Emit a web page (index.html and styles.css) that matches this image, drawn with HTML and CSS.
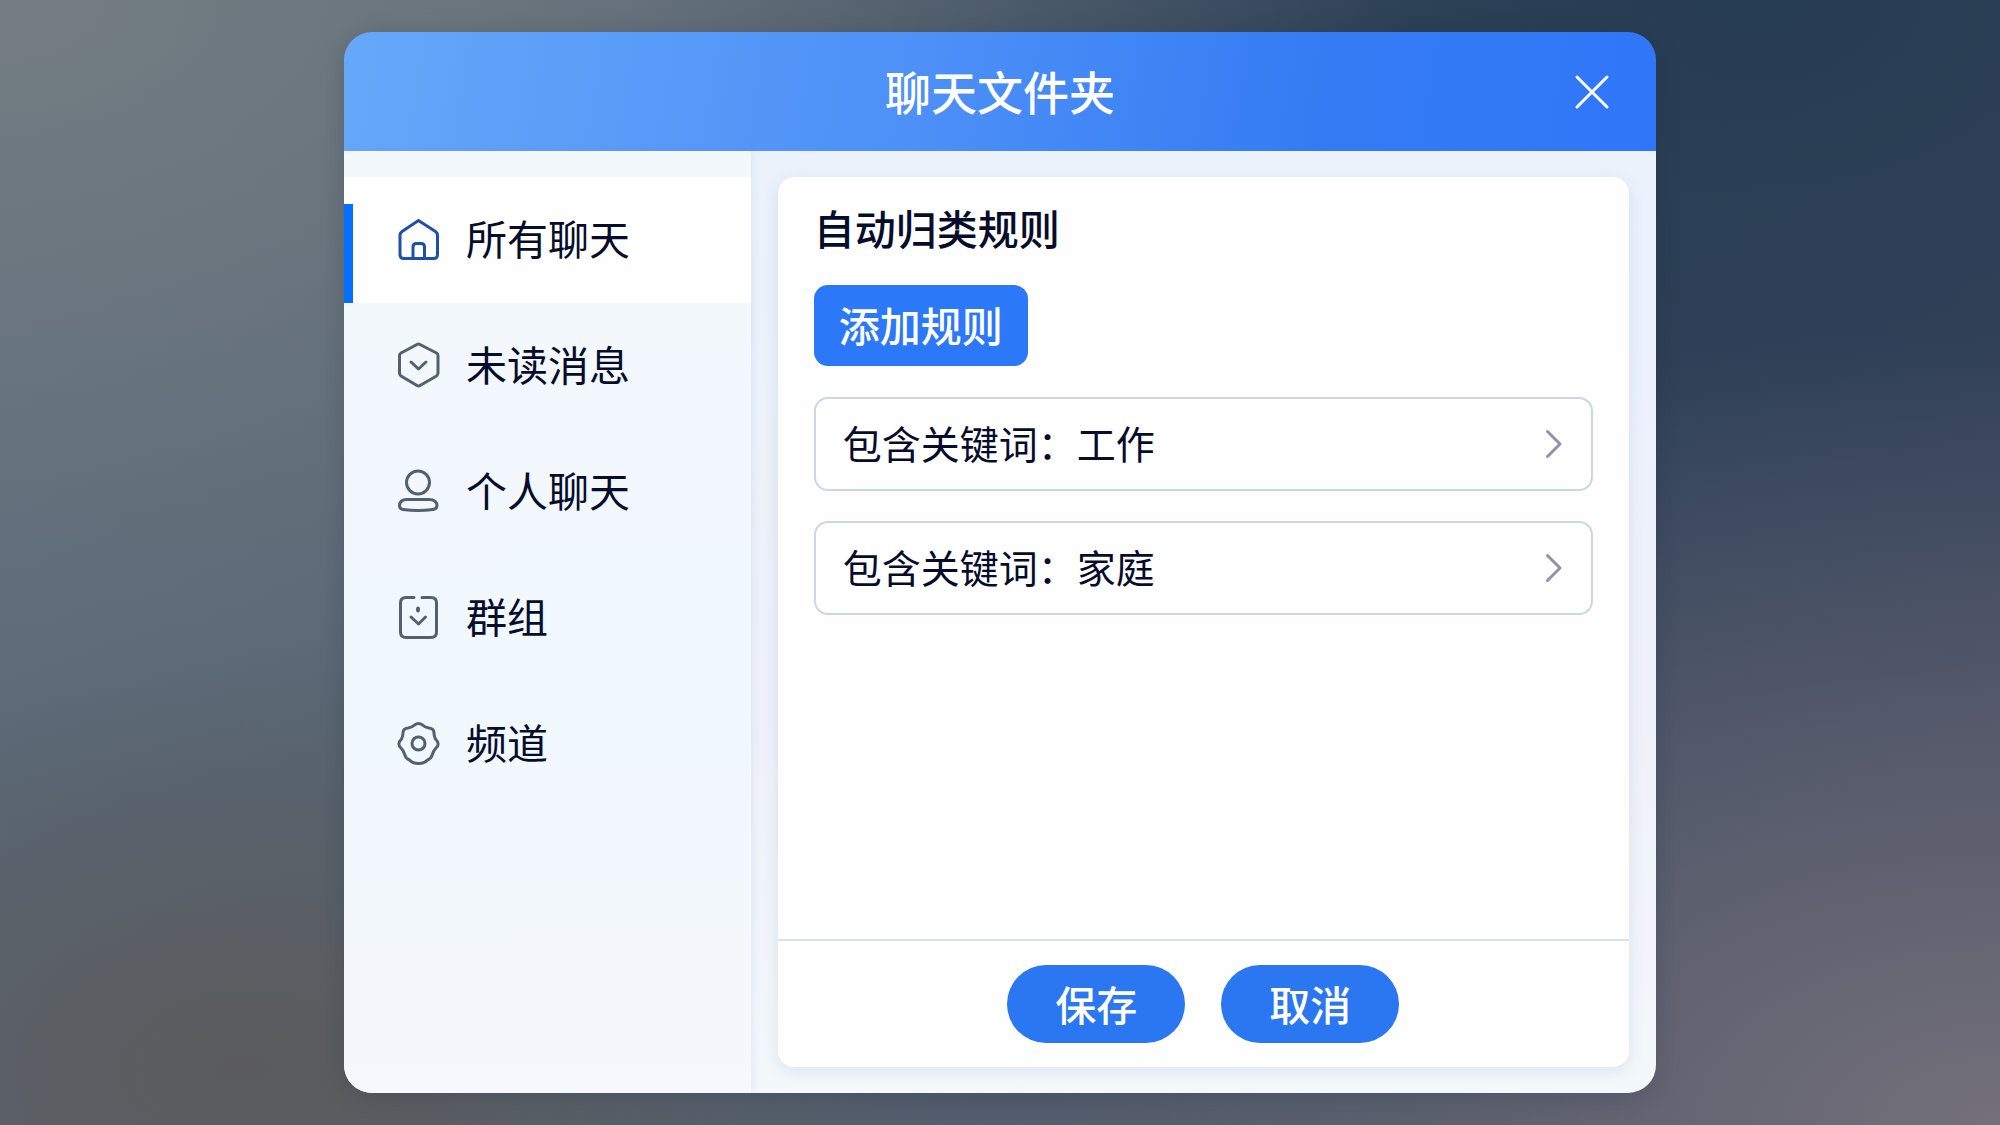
FILE: index.html
```html
<!DOCTYPE html>
<html lang="zh-CN">
<head>
  <meta charset="UTF-8">
  <title>聊天文件夹</title>
  <meta name="viewport" content="width=device-width, initial-scale=1.0">
  <link rel="stylesheet" href="styles.css">
</head>
<body>

  <div class="dialog" role="dialog" aria-labelledby="dialogTitle">
    <header class="dialog-header">
      <h1 id="dialogTitle">聊天文件夹</h1>
      <button class="close" type="button" aria-label="关闭">
        <svg viewBox="0 0 32 32"><path d="M1 1L31 31M31 1L1 31"/></svg>
      </button>
    </header>

    <div class="dialog-body">
      <nav class="sidebar">
        <a class="folder active" href="#all">
          <svg viewBox="0 0 42 42"><path d="M21.500 2.500L38.500 13.500Q40.500 15 40.500 17.500V36.500Q40.500 40.500 36.500 40.500H7Q3 40.500 3 36.500V17.500Q3 15 5 13.500Z"/><path d="M16 40V29Q16 25.500 19.500 25.500H24Q27.500 25.500 27.500 29V40"/></svg>
          <span>所有聊天</span>
        </a>
        <a class="folder" href="#unread">
          <svg viewBox="0 0 42 42"><path d="M20 .5Q21.500 -.5 23 .5L39.500 9Q41 10 41 11.500V29Q41 31 39.500 32L23 41.500Q21.500 42.500 20 41.500L4 32Q2.500 31 2.500 29V11.500Q2.500 10 4 9Z"/><path d="M14 18L21.500 25L29 18"/></svg>
          <span>未读消息</span>
        </a>
        <a class="folder" href="#personal">
          <svg viewBox="0 0 42 42"><circle cx="21" cy="12.500" r="11.500"/><path d="M10 29.500H32C37 29.500 40 32 40 36Q40 39 36 39.500Q21 41.500 6 39.500Q2.500 39 2.500 36C2.500 32 5 29.500 10 29.500Z"/></svg>
          <span>个人聊天</span>
        </a>
        <a class="folder" href="#groups">
          <svg viewBox="0 0 42 42"><path d="M17 1.500H9Q3.500 1.500 3.500 7V36Q3.500 41.500 9 41.500H34Q39.500 41.500 39.500 36V7Q39.500 1.500 34 1.500H25"/><ellipse class="dot" cx="21" cy="13.500" rx="2" ry="3"/><path d="M14 21L21.500 28L28.500 21"/></svg>
          <span>群组</span>
        </a>
        <a class="folder" href="#channels">
          <svg viewBox="0 0 42 42"><path d="M17.500 3Q21.500 0 25.500 3Q28 5.500 32 6Q37 6.500 37 11Q37 14 38.500 17Q43.500 22 39 26Q36.500 28.500 35.500 32Q34.500 36.500 30.500 38Q27.500 41.500 21.500 41.500Q15.500 41.500 12.500 38Q8.500 36.500 7.500 32Q6.500 28.500 4 26Q-.5 22 4.500 17Q6 14 6 11Q6 6.500 11 6Q15 5.500 17.500 3Z"/><circle cx="21.500" cy="21.500" r="6.500"/></svg>
          <span>频道</span>
        </a>
      </nav>

      <main class="content">
        <section class="panel">
          <div class="rules">
            <h2>自动归类规则</h2>
            <button class="add-rule" type="button">添加规则</button>
            <button class="rule" type="button">
              <span>包含关键词：工作</span>
              <svg viewBox="0 0 16 28"><path d="M1.500 1.500L14 14L1.500 26.500"/></svg>
            </button>
            <button class="rule" type="button">
              <span>包含关键词：家庭</span>
              <svg viewBox="0 0 16 28"><path d="M1.500 1.500L14 14L1.500 26.500"/></svg>
            </button>
          </div>
          <footer class="actions">
            <button type="button">保存</button>
            <button type="button">取消</button>
          </footer>
        </section>
      </main>
    </div>
  </div>

</body>
</html>
```
FILE: styles.css
```css
* {
  box-sizing: border-box;
}

body {
  margin: 0;
  min-height: 100vh;
  padding: 32px;
  display: flex;
  justify-content: center;
  font-family: "Noto Sans CJK SC", sans-serif;
  color: #060d2b;
  background:
    radial-gradient(ellipse at 100% 100%, #73707a 0%, rgba(115, 112, 122, 0) 50%),
    radial-gradient(ellipse at 12% 95%, #5b5b5c 0%, rgba(91, 91, 92, 0) 28%),
    radial-gradient(ellipse at 0% 0%, #747d83 0%, rgba(116, 125, 131, 0) 50%),
    radial-gradient(ellipse at 88% 0%, #273d53 0%, rgba(39, 61, 83, 0) 45%),
    linear-gradient(90deg, #5a6979 0%, #566472 25%, #33435b 82%, #38435c 100%);
}

button {
  border: none;
  font: inherit;
  cursor: pointer;
}

svg {
  flex: none;
  overflow: visible;
  fill: none;
  stroke: currentColor;
  stroke-width: 3;
  stroke-linecap: round;
  stroke-linejoin: round;
}

h1, h2 {
  margin: 0;
  font-weight: 500;
}

.dialog {
  width: 100%;
  max-width: 1312px;
  display: flex;
  flex-direction: column;
  border-radius: 28px;
  overflow: hidden;
  box-shadow: 0 4px 24px rgba(20, 30, 50, 0.2);
}

.dialog-header {
  display: grid;
  grid-template-columns: 1fr auto 1fr;
  align-items: center;
  height: 119px;
  padding: 0 48px;
  color: #fff;
  background: linear-gradient(100deg, #66a8f9 0%, #4c8ff7 45%, #347bf3 75%, #2f77f8 100%);
}

.dialog-header h1 {
  grid-column: 2;
  padding-bottom: 4px;
  font-size: 46px;
  line-height: 60px;
}

.close {
  justify-self: end;
  display: flex;
  padding: 0;
  color: #fff;
  background: none;
}

.close svg {
  width: 32px;
  height: 32px;
}

.dialog-body {
  flex: 1;
  display: grid;
  grid-template-columns: 31% 1fr;
  background: linear-gradient(180deg, #ebf2fc, #eef1fa 60%, #f3f8fc);
}

.sidebar {
  padding-top: 26px;
  background: linear-gradient(180deg, #f3f8fc, #f1f8fe 60%, #f5f8fc);
  box-shadow: 2px 0 8px rgba(90, 110, 160, 0.1);
}

.folder {
  position: relative;
  display: flex;
  align-items: center;
  gap: 27px;
  height: 126px;
  padding: 0 0 2px 53px;
  font-size: 41px;
  color: #060d2b;
  text-decoration: none;
}

.folder span {
  padding-bottom: 5px;
}

.folder svg {
  width: 42px;
  height: 42px;
  color: #555f6e;
}

.folder .dot {
  fill: currentColor;
  stroke: none;
}

.folder.active {
  background: #fff;
}

.folder.active::before {
  content: "";
  position: absolute;
  left: 0;
  top: 27px;
  bottom: 0;
  width: 9px;
  background: #0570ff;
}

.folder.active svg {
  color: #204fa8;
}

.content {
  display: flex;
  padding: 26px 27px;
}

.panel {
  flex: 1;
  display: flex;
  flex-direction: column;
  border-radius: 16px;
  background: #fefefe;
  box-shadow: 0 4px 16px rgba(70, 90, 130, 0.13);
}

.rules {
  flex: 1;
  display: flex;
  flex-direction: column;
  align-items: flex-start;
  padding: 20px 36px;
}

.rules h2 {
  margin-bottom: 28px;
  font-size: 41px;
  line-height: 60px;
}

.add-rule {
  height: 81px;
  margin-bottom: 31px;
  padding: 0 25px 4px;
  border-radius: 14px;
  font-size: 41px;
  font-weight: 500;
  color: #fff;
  background: #2b78f8;
}

.rule {
  display: flex;
  align-items: center;
  justify-content: space-between;
  width: 100%;
  height: 94px;
  margin-bottom: 30px;
  padding: 0 29px 0 27px;
  border: 2px solid #cbd6e8;
  border-radius: 14px;
  font-size: 39px;
  color: #060d2b;
  background: #fff;
}

.rule span {
  padding-bottom: 4px;
}

.rule svg {
  width: 16px;
  height: 28px;
  color: #8c95aa;
}

.actions {
  display: flex;
  justify-content: center;
  gap: 36px;
  padding: 24px;
  border-top: 2px solid #dbe1ec;
}

.actions button {
  width: 178px;
  height: 78px;
  padding-bottom: 4px;
  border-radius: 39px;
  font-size: 41px;
  font-weight: 500;
  color: #fff;
  background: #2b77f2;
}

@media (max-width: 900px) {
  body {
    padding: 0;
  }

  .dialog {
    border-radius: 0;
  }

  .dialog-body {
    grid-template-columns: 1fr;
  }
}
```
